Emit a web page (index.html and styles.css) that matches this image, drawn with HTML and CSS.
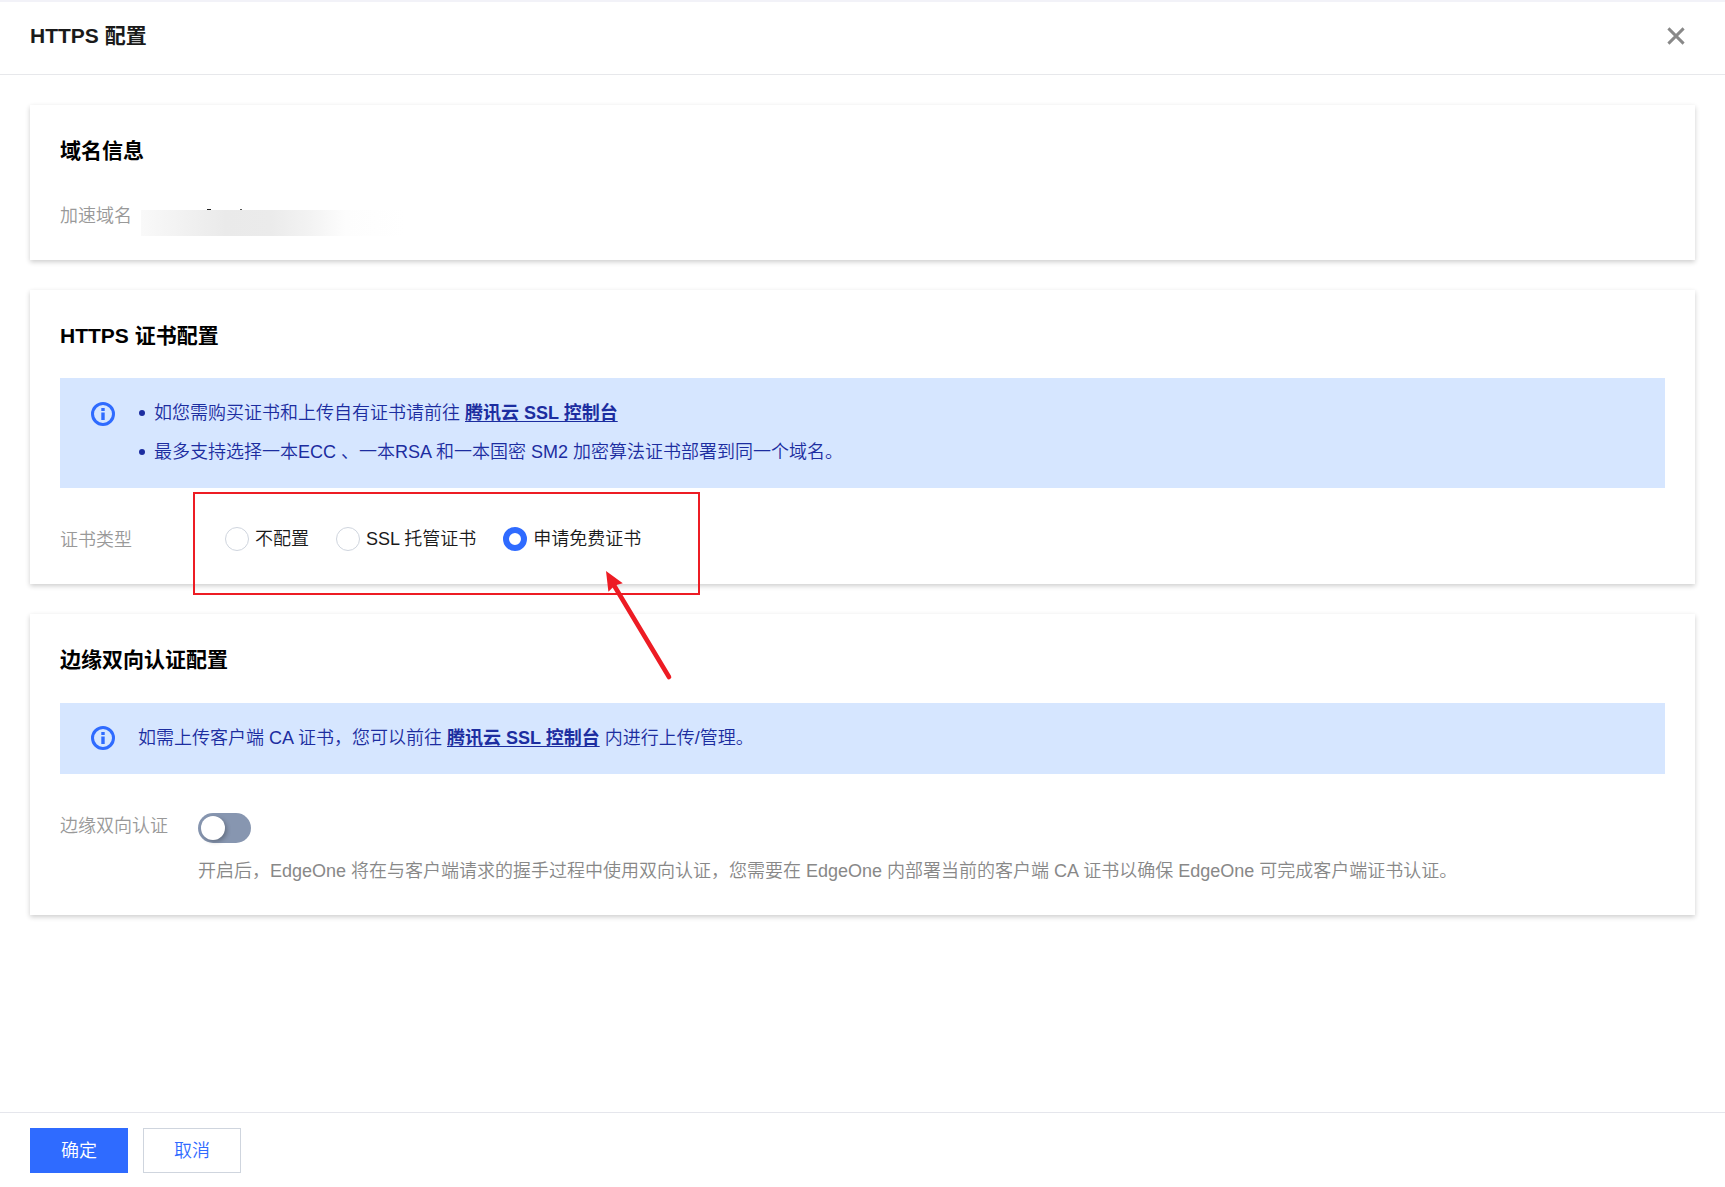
FILE: index.html
```html
<!DOCTYPE html>
<html lang="zh-CN">
<head>
    <meta charset="UTF-8">
    <meta name="viewport" content="width=device-width, initial-scale=1.0">
    <title>HTTPS 配置</title>
    <link rel="stylesheet" href="styles.css">
</head>
<body>
    <div class="drawer">
        <header class="drawer-header">
            <h1>HTTPS 配置</h1>
            <button class="close" aria-label="关闭">
                <svg width="18" height="18" viewBox="0 0 18 18"><path d="M1.4 1.4L16.6 16.6M16.6 1.4L1.4 16.6" stroke="#888" stroke-width="2.9"/></svg>
            </button>
        </header>

        <main class="drawer-body">
            <section class="card card-domain">
                <h2>域名信息</h2>
                <div class="form-row">
                    <span class="label">加速域名</span>
                    <span class="masked"></span>
                </div>
            </section>

            <section class="card card-cert">
                <h2>HTTPS 证书配置</h2>
                <div class="alert">
                    <svg class="info" width="24" height="24" viewBox="0 0 24 24"><circle cx="12" cy="12" r="10.5" fill="none" stroke="#2f6bff" stroke-width="3"/><path d="M10.3 6h3.4v3h-3.4zM10.3 10.5h3.4V18h-3.4z" fill="#2f6bff"/></svg>
                    <ul>
                        <li>如您需购买证书和上传自有证书请前往 <a href="#">腾讯云 SSL 控制台</a></li>
                        <li>最多支持选择一本ECC 、一本RSA 和一本国密 SM2 加密算法证书部署到同一个域名。</li>
                    </ul>
                </div>
                <div class="form-row">
                    <span class="label">证书类型</span>
                    <div class="radios">
                        <label class="radio"><i></i>不配置</label>
                        <label class="radio"><i></i>SSL 托管证书</label>
                        <label class="radio checked"><i></i>申请免费证书</label>
                        <div class="mark">
                            <svg width="70" height="112" viewBox="0 0 70 112"><path d="M10 17L64 107" stroke="#ed1c24" stroke-width="4.6" stroke-linecap="round"/><path d="M1 1L17.8 13.3L12.2 14.8L7.2 18L3.4 21.8Z" fill="#ed1c24"/></svg>
                        </div>
                    </div>
                </div>
            </section>

            <section class="card card-edge">
                <h2>边缘双向认证配置</h2>
                <div class="alert">
                    <svg class="info" width="24" height="24" viewBox="0 0 24 24"><circle cx="12" cy="12" r="10.5" fill="none" stroke="#2f6bff" stroke-width="3"/><path d="M10.3 6h3.4v3h-3.4zM10.3 10.5h3.4V18h-3.4z" fill="#2f6bff"/></svg>
                    <p>如需上传客户端 CA 证书，您可以前往 <a href="#">腾讯云 SSL 控制台</a> 内进行上传/管理。</p>
                </div>
                <div class="form-row">
                    <span class="label">边缘双向认证</span>
                    <div class="control">
                        <div class="switch"><i></i></div>
                        <p class="help">开启后，EdgeOne 将在与客户端请求的握手过程中使用双向认证，您需要在 EdgeOne 内部署当前的客户端 CA 证书以确保 EdgeOne 可完成客户端证书认证。</p>
                    </div>
                </div>
            </section>
        </main>

        <footer class="drawer-footer">
            <button class="btn primary">确定</button>
            <button class="btn">取消</button>
        </footer>
    </div>
</body>
</html>
```

FILE: styles.css
```css
* {
    box-sizing: border-box;
}
body {
    margin: 0;
    font-family: "Liberation Sans", "Noto Sans CJK SC", sans-serif;
    font-weight: 350;
    font-size: 18px;
    line-height: 27px;
    color: #1a1a1a;
    background-color: #fff;
}
h1, h2, p, ul {
    margin: 0;
    padding: 0;
}
button {
    font: inherit;
    cursor: pointer;
}
.drawer {
    display: flex;
    flex-direction: column;
    height: 100vh;
    border-top: 2px solid #f2f2f8;
    overflow: hidden;
}
.drawer-header {
    display: flex;
    align-items: center;
    justify-content: space-between;
    height: 73px;
    padding: 0 40px 5px 30px;
    border-bottom: 1px solid #e7e8eb;
}
h1, h2 {
    font-size: 21px;
    line-height: 32px;
    font-weight: bold;
}
h2 {
    color: #000;
}
.close {
    display: flex;
    padding: 0;
    border: none;
    background: none;
}
.drawer-body {
    flex: 1;
    display: flex;
    flex-direction: column;
    gap: 30px;
    padding: 30px;
}
.card {
    padding: 30px;
    background-color: #fff;
    box-shadow: 0 2px 5px rgba(0, 0, 0, 0.2);
}
.card-domain {
    height: 155px;
}
.card-cert {
    height: 294px;
}
.card-edge {
    height: 301px;
}
.form-row {
    display: flex;
}
.label {
    width: 138px;
    flex: none;
    color: #999;
}
.card-domain .form-row {
    margin-top: 36px;
}
.card-domain .label {
    width: 81px;
}
/* hidden domain name */
.masked {
    width: 265px;
    height: 27px;
    margin-top: 6px;
    background:
        linear-gradient(#222, #222) 66px 0 / 4px 1px no-repeat,
        linear-gradient(#555, #555) 99px 0 / 2px 1px no-repeat,
        linear-gradient(90deg, #f9f9f9, #f0f0f0 50px, #eaeaea 85px, #ebebeb 130px, #f3f3f3 170px, #fdfdfd 205px, #fff) 0 1px no-repeat;
}
.alert {
    display: flex;
    gap: 24px;
    margin-top: 26px;
    padding: 22px 30px 22px 31px;
    background-color: #d6e6ff;
    color: #1c2da0;
}
.alert .info {
    flex: none;
    margin-top: 2px;
}
.alert ul {
    display: flex;
    flex-direction: column;
    gap: 12px;
    list-style: none;
}
.alert li {
    display: flex;
    white-space: pre;
}
.alert li::before {
    content: "";
    width: 6px;
    height: 6px;
    margin: 10px 9px 0 0;
    border-radius: 50%;
    background-color: #1c2da0;
}
.alert a {
    color: inherit;
    font-weight: bold;
    text-underline-offset: 2px;
    text-decoration-thickness: 1px;
}
.card-edge .alert {
    height: 71px;
    gap: 23px;
    margin-top: 27px;
}
.card-edge .info {
    margin-top: 1px;
}
.card-cert .form-row {
    margin-top: 38px;
}
.card-cert .label {
    padding-top: 1px;
}
.radios {
    position: relative;
    display: flex;
    gap: 27px;
    padding-left: 27px;
}
.radio {
    display: flex;
    align-items: center;
    gap: 6px;
    height: 26px;
}
.radio i {
    width: 24px;
    height: 24px;
    border: 1px solid #cfd5de;
    border-radius: 50%;
}
.radio.checked i {
    border: 6px solid #2f6bff;
}
/* highlight frame round the options */
.mark {
    position: absolute;
    left: -5px;
    top: -34px;
    width: 507px;
    height: 103px;
    border: 2px solid #ed1c24;
    pointer-events: none;
}
.mark svg {
    position: absolute;
    left: 410px;
    top: 76px;
}
.card-edge .form-row {
    margin-top: 39px;
}
.switch {
    width: 53px;
    height: 30px;
    padding: 3px;
    border-radius: 15px;
    background-color: #8796b0;
}
.switch i {
    display: block;
    width: 24px;
    height: 24px;
    border-radius: 50%;
    background-color: #fff;
    box-shadow: 2px 2px 4px rgba(0, 0, 0, 0.25);
}
.help {
    margin-top: 15px;
    color: #888;
}
.drawer-footer {
    display: flex;
    gap: 15px;
    height: 75px;
    padding: 15px 30px;
    border-top: 1px solid #e5e6ec;
}
.btn {
    width: 98px;
    height: 45px;
    padding: 2px 0 0;
    border: 1px solid #cfd5de;
    background-color: #fff;
    color: #2f6bff;
}
.btn.primary {
    border-color: #2f6bff;
    background-color: #2f6bff;
    color: #fff;
}
```
